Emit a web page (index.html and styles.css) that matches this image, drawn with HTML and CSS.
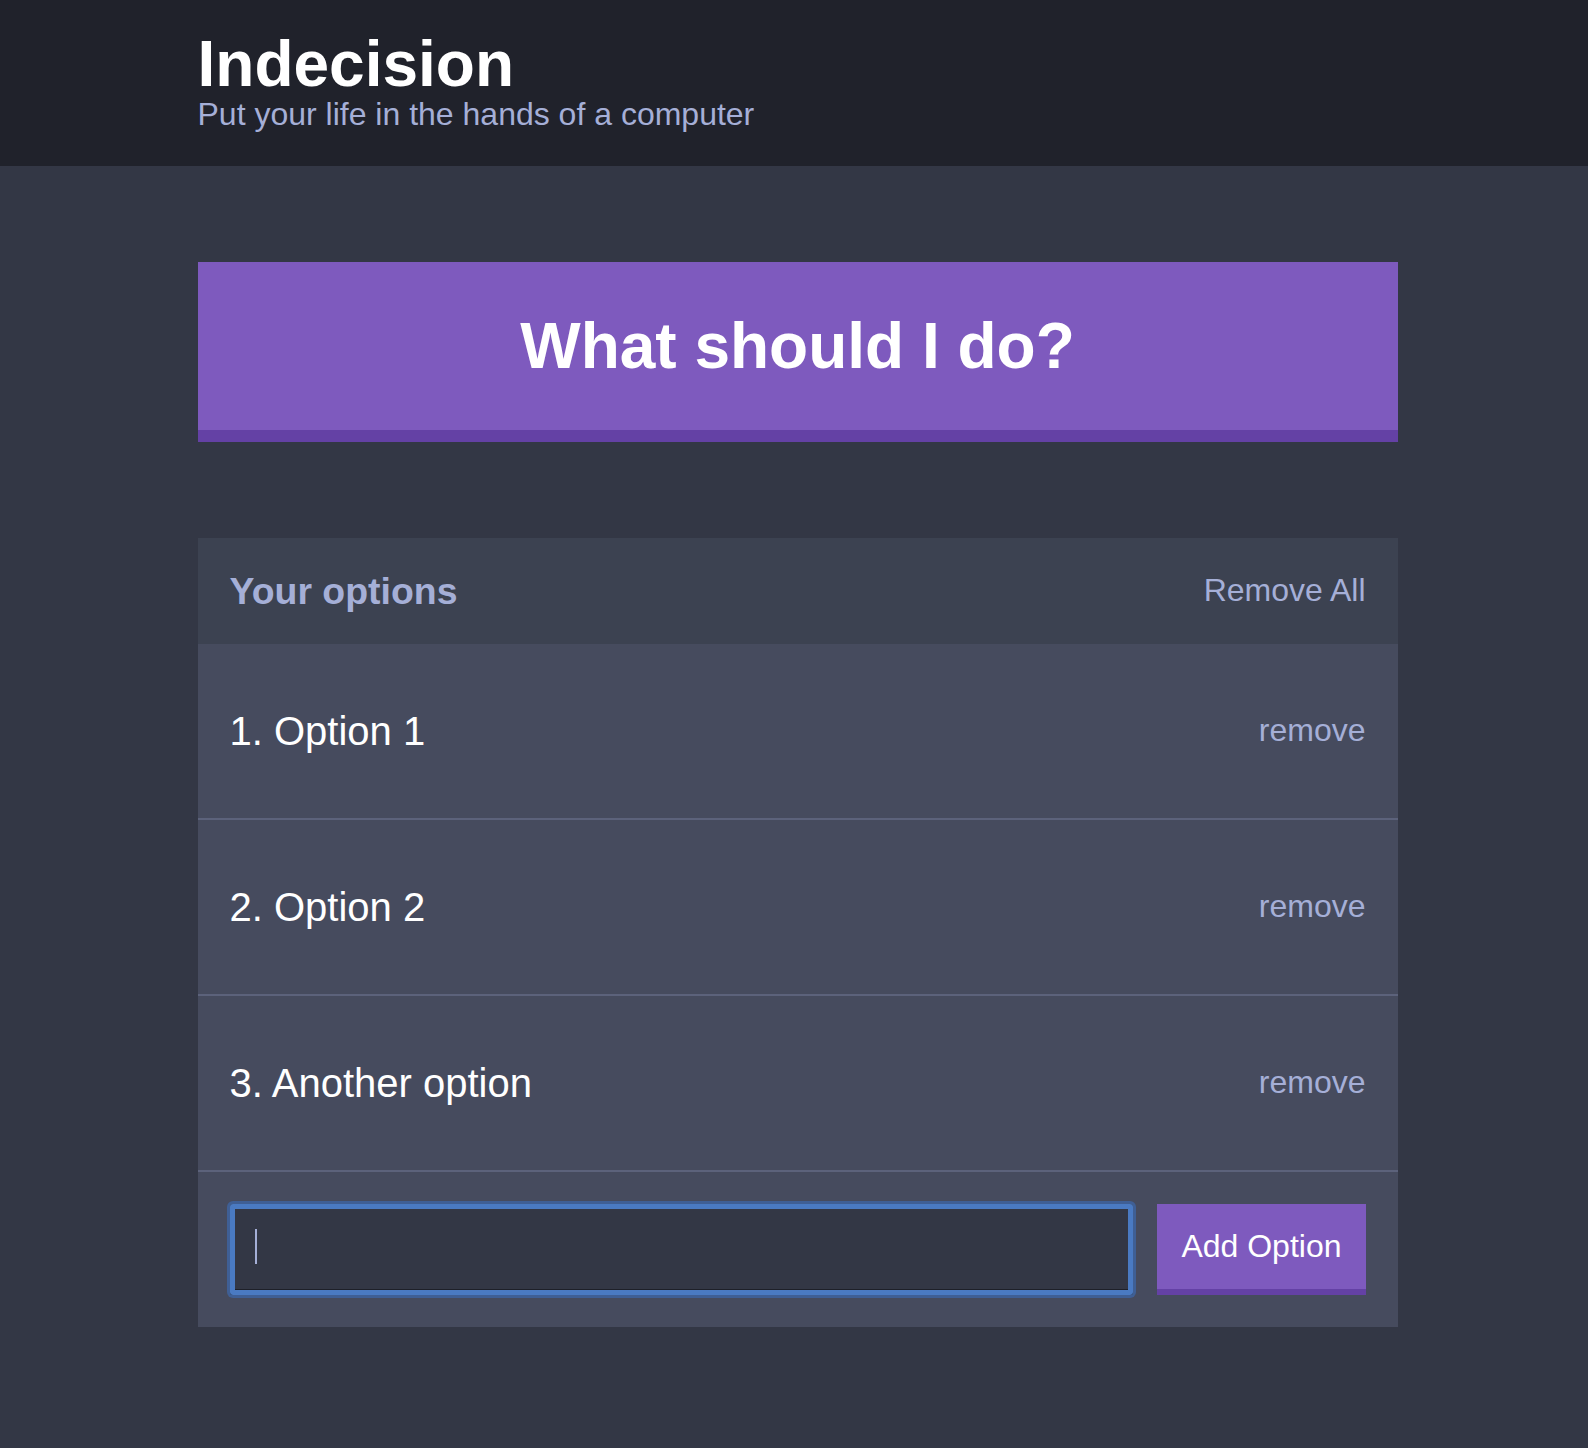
FILE: index.html
```html
<!DOCTYPE html>
<html lang="en">
<head>
<meta charset="utf-8">
<title>Indecision</title>
<link rel="stylesheet" href="styles.css">
</head>
<body>
<header class="header">
  <div class="container">
    <h1 class="header__title">Indecision</h1>
    <h2 class="header__subtitle">Put your life in the hands of a computer</h2>
  </div>
</header>
<main class="container">
  <button class="big-button">What should I do?</button>
  <div class="widget">
    <div class="widget-header">
      <h3 class="widget-header__title">Your options</h3>
      <button class="button--link">Remove All</button>
    </div>
    <div class="option">
      <p class="option__text">1. Option 1</p>
      <button class="button--link">remove</button>
    </div>
    <div class="option">
      <p class="option__text">2. Option 2</p>
      <button class="button--link">remove</button>
    </div>
    <div class="option">
      <p class="option__text">3. Another option</p>
      <button class="button--link">remove</button>
    </div>
    <form class="add-option">
      <div class="add-option__field">
        <input class="add-option__input" type="text" name="option">
        <span class="caret"></span>
      </div>
      <button class="button" type="button">Add Option</button>
    </form>
  </div>
</main>
</body>
</html>
```
FILE: styles.css
```css
* {
  box-sizing: border-box;
}

html,
body {
  margin: 0;
  padding: 0;
}

body {
  background: #333745;
  color: #ffffff;
  font-family: "Liberation Sans", Arial, Helvetica, sans-serif;
  font-size: 32px;
}

.container {
  width: 1207px;
  padding-left: 7px;
  margin: 0 auto;
}

.header {
  background: #20222b;
  padding: 32px 0 33px;
  margin-bottom: 96px;
}

.header__title {
  margin: 0;
  font-size: 64px;
  line-height: 64px;
  font-weight: bold;
  color: #ffffff;
}

.header__subtitle {
  margin: 0;
  font-size: 32px;
  line-height: 36.8px;
  font-weight: normal;
  color: #a5afd7;
}

.big-button {
  display: block;
  width: 100%;
  margin: 0 0 96px;
  padding: 48px;
  background: #7e5abe;
  border: none;
  border-bottom: 12px solid #6441a5;
  color: #ffffff;
  font-family: inherit;
  font-size: 64px;
  line-height: 72px;
  font-weight: bold;
}

.widget {
  background: #464b5e;
  margin-bottom: 96px;
}

.widget-header {
  display: flex;
  justify-content: space-between;
  align-items: center;
  padding: 32px;
  background: #3c4251;
}

.widget-header__title {
  margin: 0;
  font-size: 37.44px;
  line-height: 42px;
  font-weight: bold;
  color: #a5afd7;
}

.button--link {
  padding: 0;
  background: none;
  border: none;
  color: #a5afd7;
  font-family: inherit;
  font-size: 32px;
  line-height: 36.8px;
}

.option {
  display: flex;
  justify-content: space-between;
  align-items: center;
  padding: 64px 32px;
  border-bottom: 2px solid #5c627b;
}

.option__text {
  margin: 0;
  font-size: 40px;
  line-height: 46px;
  color: #ffffff;
}

.add-option {
  display: flex;
  gap: 24px;
  padding: 32px;
}

.add-option__field {
  position: relative;
  display: flex;
  flex-grow: 1;
}

.add-option__input {
  flex-grow: 1;
  padding: 24px;
  background: #333745;
  border: none;
  border-radius: 3px;
  color: #a5afd7;
  font-family: inherit;
  font-size: 32px;
  outline: none;
  box-shadow: 0 0 0 3px #3f5f95, inset 0 0 0 5px #4a7ac2, inset 0 -6px 0 0 #1e2029;
}

.caret {
  position: absolute;
  left: 25px;
  top: 25px;
  width: 2px;
  height: 35px;
  background: #a5afd7;
}

.button {
  padding: 24px;
  background: #7e5abe;
  border: none;
  border-bottom: 6px solid #6441a5;
  color: #ffffff;
  font-family: inherit;
  font-size: 32px;
  line-height: 36.8px;
  font-weight: 500;
}
```
